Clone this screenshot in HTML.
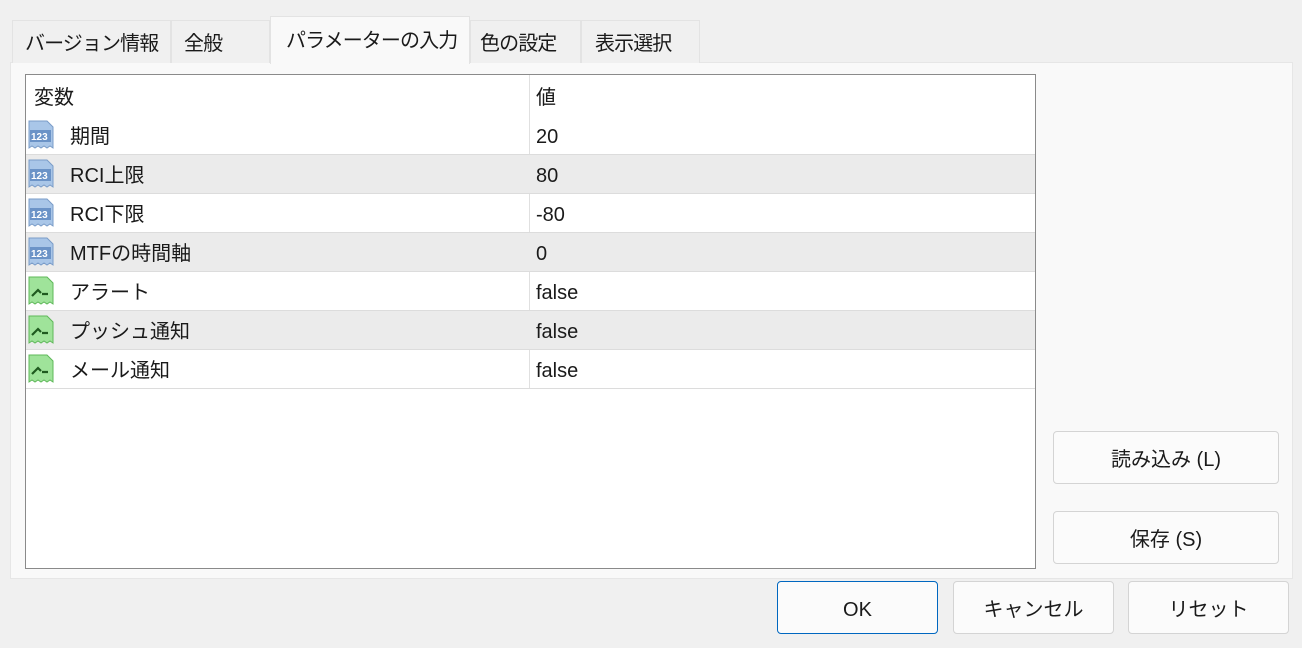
<!DOCTYPE html>
<html><head><meta charset="utf-8"><style>
*{margin:0;padding:0;box-sizing:border-box}
body{width:1302px;height:648px;background:#f0f0f0;font-family:"Liberation Sans","Noto Sans CJK JP",sans-serif;color:#1a1a1a;position:relative;overflow:hidden;font-size:20px}
.a{position:absolute}
.tab{position:absolute;top:20px;height:43px;background:#f0f0f0;border:1px solid #e3e3e3;border-bottom:none;line-height:46px;padding-left:12px;font-size:20px;white-space:nowrap;letter-spacing:-0.9px}
.tab.act{top:16px;height:48px;background:#f9f9f9;line-height:48px;padding-left:15px;z-index:2}
.panel{left:10px;top:62px;width:1283px;height:517px;background:#f9f9f9;border:1px solid #e6e6e6}
.tbl{left:25px;top:74px;width:1011px;height:495px;background:#fff;border:1px solid #8a8a8a}
.row{position:absolute;left:0;width:1009px;height:39px;border-bottom:1px solid #dcdcdc;line-height:42px;white-space:nowrap}
.row.g{background:#ebebeb}
.row .n{position:absolute;left:44px}
.row .v{position:absolute;left:510px}
.col{position:absolute;left:503px;top:0;width:1px;height:313px;background:#e0e0e0}
.ic{position:absolute;left:2px;top:4px}
.btn{position:absolute;background:#fbfbfb;border:1px solid #d4d4d4;border-radius:4px;text-align:center;font-size:20px;line-height:56px}
</style></head><body>
<div class="a panel"></div>
<div class="tab" style="left:12px;width:159px">バージョン情報</div>
<div class="tab" style="left:171px;width:99px">全般</div>
<div class="tab act" style="left:270px;width:200px">パラメーターの入力</div>
<div class="tab" style="left:470px;width:111px;padding-left:9px">色の設定</div>
<div class="tab" style="left:581px;width:119px;padding-left:13px">表示選択</div>
<div class="a tbl">
 <div class="row" style="top:0;height:41px;border:none;line-height:46px"><span class="a" style="left:8px">変数</span><span class="a" style="left:510px">値</span></div>
 <div class="col" style="top:0"></div>
 <div id="rows"></div>
</div>
<div class="btn" style="left:1053px;top:431px;width:226px;height:53px">読み込み (L)</div>
<div class="btn" style="left:1053px;top:511px;width:226px;height:53px">保存 (S)</div>
<div class="btn" style="left:777px;top:581px;width:161px;height:53px;border-color:#0067c0">OK</div>
<div class="btn" style="left:953px;top:581px;width:161px;height:53px">キャンセル</div>
<div class="btn" style="left:1128px;top:581px;width:161px;height:53px">リセット</div>
<script>
var d=[["期間","20",0],["RCI上限","80",0],["RCI下限","-80",0],["MTFの時間軸","0",0],["アラート","false",1],["プッシュ通知","false",1],["メール通知","false",1]];
var h="";
var num='<svg class="ic" width="26" height="30" viewBox="0 0 26 30"><path d="M1 1h18l6 6v21l-3-2-3 2-3-2-3 2-3-2-3 2-3-2-3 2z" fill="#a9c6e8" stroke="#7a9cc8"/><rect x="2" y="10" width="21" height="12" fill="#6b93c7"/><text x="3" y="20" font-size="10" font-weight="bold" fill="#fff" font-family="Liberation Sans">123</text></svg>';
var bool='<svg class="ic" width="26" height="30" viewBox="0 0 26 30"><path d="M1 1h18l6 6v21l-3-2-3 2-3-2-3 2-3-2-3 2-3-2-3 2z" fill="#9fe39a" stroke="#5fb85a"/><path d="M4 20l6-6 3 3M14 18h6" stroke="#1f5a1f" stroke-width="2.2" fill="none"/></svg>';
d.forEach(function(r,i){h+='<div class="row'+(i%2?' g':'')+'" style="top:'+(41+i*39)+'px">'+(r[2]?bool:num)+'<span class="n">'+r[0]+'</span><span class="v">'+r[1]+'</span></div>';});
document.getElementById('rows').innerHTML=h;
</script>
</body></html>
